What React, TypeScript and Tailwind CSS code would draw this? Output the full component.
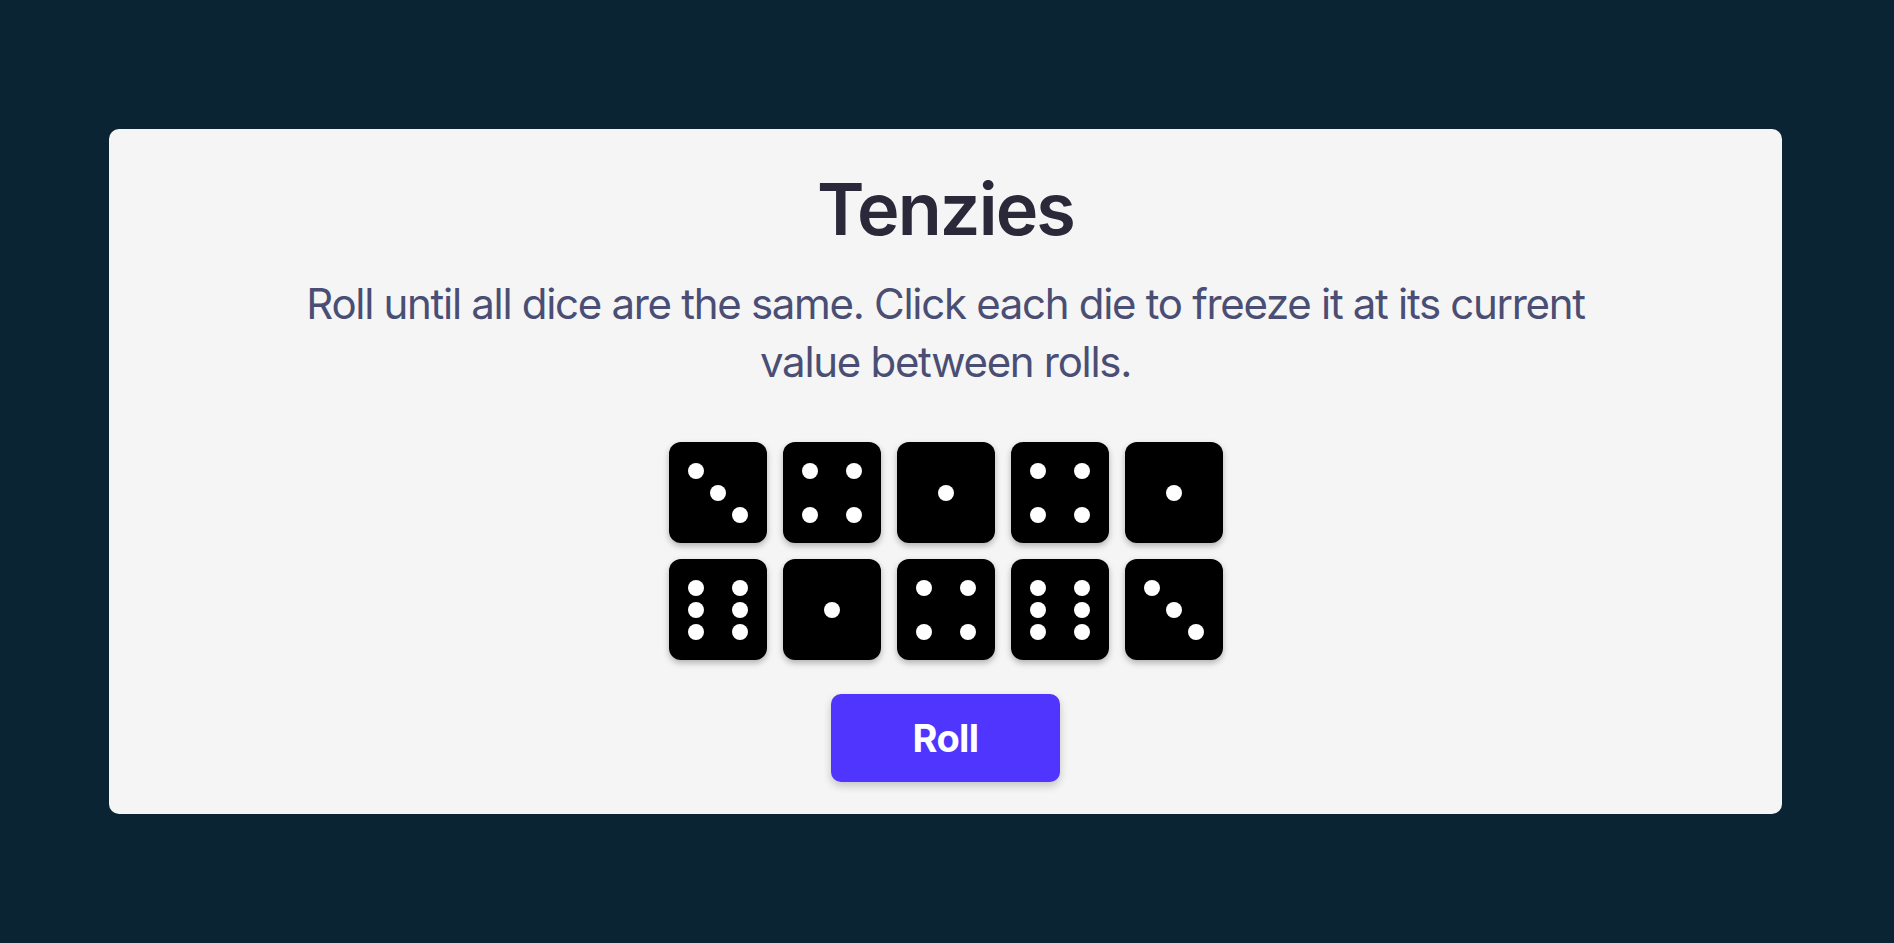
import React from "react";

const PIPS: Record<number, number[]> = {
  1: [4],
  2: [0, 8],
  3: [0, 4, 8],
  4: [0, 2, 6, 8],
  5: [0, 2, 4, 6, 8],
  6: [0, 2, 3, 5, 6, 8],
};

function Die({ value }: { value: number }) {
  const on = PIPS[value];
  return (
    <div className="w-[98px] h-[101px] bg-black rounded-[12px] shadow-[0_3px_6px_rgba(0,0,0,0.28)] flex items-center justify-center">
      <div className="grid grid-cols-[22px_22px_22px] grid-rows-[22px_22px_22px]">
        {Array.from({ length: 9 }).map((_, i) => (
          <div key={i} className="flex items-center justify-center">
            {on.includes(i) ? <div className="w-[16px] h-[16px] rounded-full bg-white" /> : null}
          </div>
        ))}
      </div>
    </div>
  );
}

export default function App() {
  const dice = [3, 4, 1, 4, 1, 6, 1, 4, 6, 3];
  return (
    <div
      className="w-full h-[943px] bg-[#0B2434] flex items-center justify-center"
      style={{ fontFamily: "Inter, 'Noto Sans', sans-serif" }}
    >
      <div className="w-[1673px] h-[685px] bg-[#F5F5F5] rounded-[10px] flex flex-col items-center pt-[44px] mr-[3px]">
        <h1 className="text-[72px] leading-[1] font-semibold text-[#2B283A] tracking-[-1.9px]">Tenzies</h1>
        <p className="mt-[30px] max-w-[1320px] text-center text-[42px] leading-[58px] text-[#4A4E74] tracking-[-1.3px]">
          Roll until all dice are the same. Click each die to freeze it at its current value between rolls.
        </p>
        <div className="mt-[51px] grid grid-cols-[98px_98px_98px_98px_98px] gap-[16px]">
          {dice.map((d, i) => (
            <Die key={i} value={d} />
          ))}
        </div>
        <button className="mt-[34px] w-[229px] h-[88px] rounded-[10px] bg-[#5035FF] text-white text-[38px] font-bold tracking-[-0.6px] shadow-[0_4px_8px_rgba(0,0,0,0.2)]">
          Roll
        </button>
      </div>
    </div>
  );
}
